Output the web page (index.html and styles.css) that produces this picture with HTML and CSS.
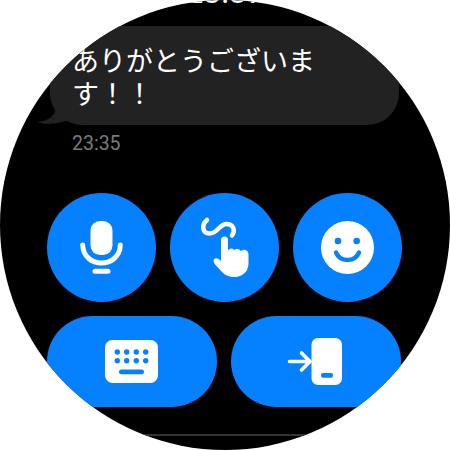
FILE: index.html
```html
<!DOCTYPE html>
<html lang="ja">
<head>
<meta charset="utf-8">
<title>Messages</title>
<link rel="stylesheet" href="styles.css">
</head>
<body>
<main class="watch">
  <div class="clock">23:37</div>
  <section class="message">
    <div class="bubble">ありがとうございます！！
      <svg class="tail" width="36" height="44" viewBox="0 0 36 44"><path d="M13 0V13Q14 22 19 28C17 35 12 40 0 41Q12 46 31 39Q34 41 36 42V0Z"/></svg>
    </div>
    <time class="time">23:35</time>
  </section>
  <div class="row">
    <button class="action round" aria-label="音声">
      <svg width="109" height="109" viewBox="0 0 109 109"><rect x="43.500" y="28" width="22" height="34" rx="9.500" fill="#fff"/><path d="M35.700 52C36.500 76 72.500 76 73.300 52M48 78.200H61" class="line"/></svg>
    </button>
    <button class="action round" aria-label="手書き">
      <svg width="109" height="109" viewBox="0 0 109 109"><path d="M37 27C31 32 32.500 40.500 39.500 40.500C48 40.500 49 31 56.500 31C63 31 66 37 62 42.500" class="line scribble"/><path d="M51 47a3.500 3.500 0 0 1 7 0V57.500Q61 54 64 57Q68 54.500 71 58Q74 56 76.500 57.500Q78.500 58.500 78.500 61V71C78 85 60 88 52 79L45.500 72C41 66.500 45.500 62.500 51 68Z" fill="#fff"/></svg>
    </button>
    <button class="action round" aria-label="絵文字">
      <svg width="109" height="109" viewBox="0 0 109 109"><circle cx="54.500" cy="54.500" r="26.500" fill="#fff"/><g fill="#0581ff"><circle cx="45" cy="48" r="3.300"/><circle cx="63.700" cy="48" r="3.300"/></g><path d="M43 59.500C47 69.500 62 69.500 66 59.500" class="line smile"/></svg>
    </button>
  </div>
  <div class="row lower">
    <button class="action pill" aria-label="キーボード">
      <svg width="170" height="91" viewBox="0 0 170 91"><rect x="58" y="24" width="53" height="43" rx="7.500" fill="#fff"/><g fill="#0581ff"><circle cx="70.300" cy="36" r="2.700"/><circle cx="79.700" cy="36" r="2.700"/><circle cx="89.300" cy="36" r="2.700"/><circle cx="98.700" cy="36" r="2.700"/><circle cx="70.300" cy="44.800" r="2.700"/><circle cx="79.700" cy="44.800" r="2.700"/><circle cx="89.300" cy="44.800" r="2.700"/><circle cx="98.700" cy="44.800" r="2.700"/><rect x="72" y="53.500" width="25" height="4.700" rx="2.300"/></g></svg>
    </button>
    <button class="action pill" aria-label="スマートフォンで開く">
      <svg width="170" height="91" viewBox="0 0 170 91"><rect x="80.500" y="22" width="30.500" height="47" rx="6.500" fill="#fff"/><rect x="90" y="57" width="12" height="4.700" rx="2" fill="#0581ff"/><path d="M58.500 45.500H78M70.500 37L79 45.500L70.500 54" class="line arrow"/></svg>
    </button>
  </div>
  <hr class="divider">
</main>
</body>
</html>
```

FILE: styles.css
```css
* { box-sizing: border-box; }
body { margin: 0; background: #fff; }
.watch {
  position: relative;
  width: 450px;
  height: 450px;
  padding: 26px 0 0 47px;
  overflow: hidden;
  background: #000;
  border-radius: 50%;
}
.clock {
  position: absolute;
  top: -24px;
  left: 0;
  width: 450px;
  font: 32px/32px Roboto, sans-serif;
  text-align: center;
  color: #fff;
}
.message { height: 167px; }
.bubble {
  position: relative;
  width: 349px;
  height: 99px;
  margin-left: 3px;
  padding: 17px 60px 0 22px;
  background: #222;
  border-radius: 0 0 32px 32px;
  color: #fff;
  font: 27px/33px "Noto Sans CJK JP", sans-serif;
}
.tail {
  position: absolute;
  left: -13px;
  bottom: 0;
  fill: #222;
}
.time {
  display: block;
  margin: 7px 0 0 25px;
  font: 19.5px/24px Roboto, sans-serif;
  color: #7b7b7b;
}
.row { display: flex; gap: 14px; }
.lower { margin-top: 14px; }
.action {
  display: block;
  padding: 0;
  border: 0;
  background: #0581ff;
}
.action svg { display: block; }
.round { width: 109px; height: 109px; border-radius: 50%; }
.pill { width: 170px; height: 91px; border-radius: 46px; }
.line {
  fill: none;
  stroke: #fff;
  stroke-width: 5;
  stroke-linecap: round;
  stroke-linejoin: round;
}
.scribble { stroke-width: 4.5; }
.smile { stroke: #0581ff; stroke-width: 4.5; }
.arrow { stroke-width: 3.6; }
.divider {
  width: 354px;
  height: 2px;
  margin: 27px 0 0;
  border: 0;
  background: #333;
}
```
